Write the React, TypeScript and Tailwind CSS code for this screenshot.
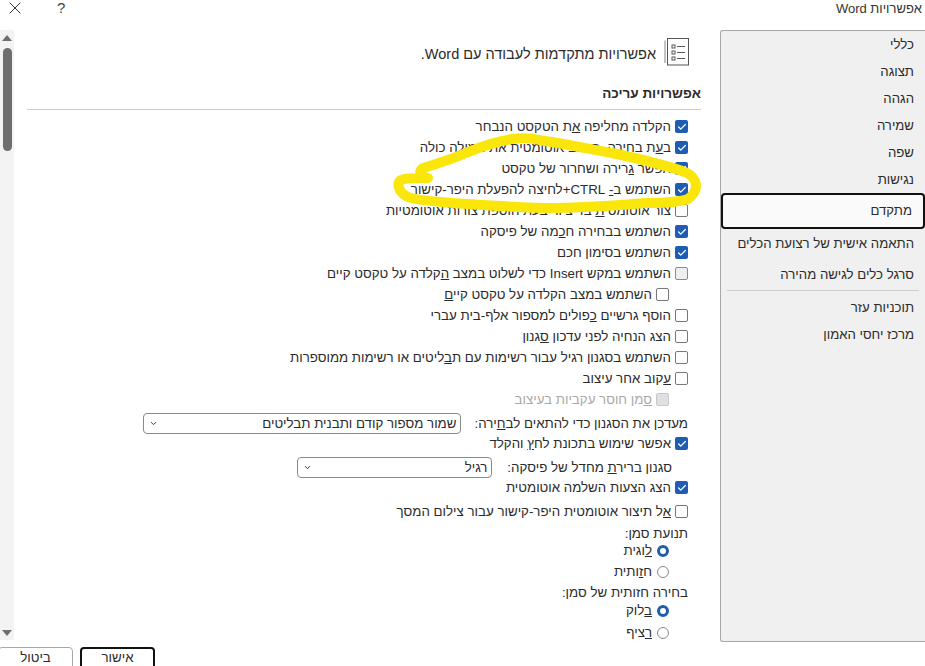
import React from 'react';
import { X, ChevronDown, Check } from 'lucide-react';

function Box({ state = 'off' }: { state?: 'on' | 'off' | 'grey' | 'disabled' }) {
  if (state === 'on') {
    return (
      <span className="w-[13px] h-[13px] shrink-0 rounded-[2px] bg-[#1f5cb4] flex items-center justify-center">
        <Check className="w-[10px] h-[10px] text-white" strokeWidth={3} />
      </span>
    );
  }
  if (state === 'grey') return <span className="w-[13px] h-[13px] shrink-0 rounded-[2px] border border-[#8a8a8a] bg-[#efefef]" />;
  if (state === 'disabled') return <span className="w-[13px] h-[13px] shrink-0 rounded-[2px] border border-[#c8c8c8] bg-[#e0e0e0]" />;
  return <span className="w-[13px] h-[13px] shrink-0 rounded-[2px] border border-[#777]" />;
}

function CheckRow({ state, indent, faded, children }: { state?: 'on' | 'off' | 'grey' | 'disabled'; indent?: boolean; faded?: boolean; children: React.ReactNode }) {
  return (
    <div className={`h-[21px] flex items-center gap-[4px] ${indent ? 'pr-[19px]' : ''} ${faded ? 'text-[#a9a9a9]' : ''}`}>
      <Box state={state} />
      <span>{children}</span>
    </div>
  );
}

function Radio({ on, children }: { on?: boolean; children: React.ReactNode }) {
  return (
    <div className="h-[21px] flex items-center gap-[5px] pr-[19px]">
      {on ? (
        <span className="w-[12px] h-[12px] rounded-full border-[3.5px] border-[#1f5cb4] bg-white shrink-0" />
      ) : (
        <span className="w-[12px] h-[12px] rounded-full border border-[#8a8a8a] shrink-0" />
      )}
      <span>{children}</span>
    </div>
  );
}

function Combo({ width, children }: { width: string; children: React.ReactNode }) {
  return (
    <div className={`${width} h-[21px] rounded-[4px] border border-[#8a8a8a] flex items-center justify-between pr-[4px] pl-[5px]`}>
      <span>{children}</span>
      <ChevronDown className="w-[9px] h-[9px] text-[#333]" strokeWidth={2.5} />
    </div>
  );
}

const navTop = ['כללי', 'תצוגה', 'הגהה', 'שמירה', 'שפה', 'נגישות'];

export default function App() {
  return (
    <div dir="rtl" className="relative w-[925px] h-[666px] overflow-hidden bg-white text-[13.3px] leading-[18px] text-[#2b2b2b]" style={{ fontFamily: '"Liberation Sans", Arial, sans-serif' }}>
      {/* Title bar */}
      <div className="h-[30px] flex items-start justify-between pr-[3px] pl-[5px]">
        <span className="text-[13px] text-[#333]">אפשרויות Word</span>
        <div dir="ltr" className="flex items-center gap-[32px] -mt-[2px]">
          <X className="w-[20px] h-[20px] text-[#333]" strokeWidth={1.2} />
          <span className="text-[15px] text-[#444]">?</span>
        </div>
      </div>

      <div className="flex h-[606px]">
        {/* Side nav */}
        <div className="w-[205px] h-[612px] rounded-l-[3px] border border-r-0 border-[#a8a8a8] bg-[#f0f0f0] text-[13.2px] shrink-0 -ml-[1px]">
          <div className="flex flex-col">
            {navTop.map(n => (
              <div key={n} className="h-[27px] flex items-center pr-[11px]">{n}</div>
            ))}
            <div className="h-[36px] rounded-[4px] border-2 border-[#111] bg-[#fafafa] flex items-center pr-[11px]">מתקדם</div>
            <div className="h-[30px] flex items-center pr-[11px]">התאמה אישית של רצועת הכלים</div>
            <div className="h-[31px] flex items-center pr-[11px]">סרגל כלים לגישה מהירה</div>
            <div className="h-px bg-[#cfcfcf] mx-[6px] mb-[3px]" />
            <div className="h-[27px] flex items-center pr-[11px]">תוכניות עזר</div>
            <div className="h-[27px] flex items-center pr-[11px]">מרכז יחסי האמון</div>
          </div>
        </div>

        {/* Main */}
        <div className="flex-1 min-w-0 pr-[20px] pl-[13px]">
          <div className="flex items-center gap-[8px] h-[44px] pr-[11px]">
            <svg width="26" height="30" viewBox="0 0 26 30" fill="none" stroke="#555" strokeWidth="1" className="shrink-0">
              <path d="M1 3.5V26" stroke="#888" />
              <rect x="3.5" y="1.5" width="21" height="26.5" />
              <rect x="8" y="8" width="3" height="3" />
              <rect x="8" y="14" width="3" height="3" />
              <rect x="8" y="20" width="3" height="3" />
              <path d="M13 9.5h8M13 15.5h8M13 21.5h8" />
            </svg>
            <span className="text-[14.5px] pt-[4px]">אפשרויות מתקדמות לעבודה עם Word.</span>
          </div>
          <div className="mt-[12px] h-[24px] font-bold text-[13.5px] leading-[16px] border-b border-[#cfcfcf]">אפשרויות עריכה</div>

          <div className="mt-[6px] pr-[13px] flex flex-col">
            <CheckRow state="on">הקלדה מחליפה <u>א</u>ת הטקסט הנבחר</CheckRow>
            <CheckRow state="on">ב<u>ע</u>ת בחירה, הרחב אוטומטית את המילה כולה</CheckRow>
            <CheckRow state="on">אפשר <u>ג</u>רירה ושחרור של טקסט</CheckRow>
            <CheckRow state="on">השתמש ב<u>-</u> CTRL+לחיצה להפעלת היפר-קישור</CheckRow>
            <CheckRow>צור אוטומטי<u>ת</u> בד ציור בעת הוספת צורות אוטומטיות</CheckRow>
            <CheckRow state="on">השתמש בבחירה ח<u>כ</u>מה של פיסקה</CheckRow>
            <CheckRow state="on">השתמש בסימו<u>ן</u> חכם</CheckRow>
            <CheckRow state="grey">השתמש במקש Insert כדי לשלוט במצב <u>ה</u>קלדה על טקסט קיים</CheckRow>
            <CheckRow indent>השתמש במצב הקלדה על טקסט קיי<u>ם</u></CheckRow>
            <CheckRow>הוסף גרשיים <u>כ</u>פולים למספור אלף-בית עברי</CheckRow>
            <CheckRow>הצג הנחיה לפני עדכון <u>ס</u>גנון</CheckRow>
            <CheckRow>השתמש בסגנון רגיל עבור רשימות עם ת<u>ב</u>ליטים או רשימות ממוספרות</CheckRow>
            <CheckRow><u>ע</u>קוב אחר עיצוב</CheckRow>
            <CheckRow state="disabled" indent faded><u>ס</u>מן חוסר עקביות בעיצוב</CheckRow>

            <div className="h-[21px] mt-[3px] -mb-[1px] flex items-center gap-[13px]">
              <span>מעדכן את הסגנון כדי להתאים לב<u>ח</u>ירה:</span>
              <Combo width="w-[318px]">שמור מספור קודם ותבנית תבליטים</Combo>
            </div>
            <CheckRow state="on">אפשר שימוש בתכונת לח<u>ץ</u> והקלד</CheckRow>
            <div className="h-[21px] mt-[3px] -mb-[1px] flex items-center gap-[15px] pr-[16px]">
              <span>סגנון בריר<u>ת</u> מחדל של פיסקה:</span>
              <Combo width="w-[195px]">רגיל</Combo>
            </div>
            <CheckRow state="on">הצג הצעות השלמה אוטומטית</CheckRow>
            <div className="mt-[3px]">
              <CheckRow><u>א</u>ל תיצור אוטומטית היפר-קישור עבור צילום המסך</CheckRow>
            </div>
            <div className="h-[17px] mt-[3px] -mb-[2px] flex items-center">תנועת סמן:</div>
            <Radio on><u>ל</u>וגית</Radio>
            <Radio>ח<u>ז</u>ותית</Radio>
            <div className="h-[17px] mt-[2px] -mb-[1px] flex items-center">בחירה חזותית של סמן:</div>
            <Radio on><u>ב</u>לוק</Radio>
            <div className="mt-[1px]">
              <Radio><u>ר</u>ציף</Radio>
            </div>
          </div>
        </div>

        {/* Scrollbar */}
        <div className="w-[14px] h-[610px] bg-[#f3f3f3] shrink-0 flex flex-col items-center pt-[5px]">
          <span className="w-0 h-0 border-x-[5px] border-x-transparent border-b-[6px] border-b-[#6e6e6e]" />
          <span className="mt-[7px] w-[9px] h-[103px] rounded-full bg-[#6e6e6e]" />
          <span className="mt-auto mb-[4px] w-0 h-0 border-x-[5px] border-x-transparent border-t-[6px] border-t-[#6e6e6e]" />
        </div>
      </div>

      {/* Footer buttons sit over the bottom edge of the page */}
      <div className="absolute left-[-2px] top-[647px] flex flex-row-reverse gap-[7px] leading-[14px]" dir="ltr">
        <div className="w-[75px] h-[30px] rounded-[4px] border-2 border-[#111] flex justify-center pt-[2px]">אישור</div>
        <div className="w-[75px] h-[30px] rounded-[4px] border border-[#a8a8a8] flex justify-center pt-[3px]">ביטול</div>
      </div>

      {/* Yellow marker scribble */}
      <svg className="absolute left-0 top-0 pointer-events-none" width="925" height="666" fill="none">
        <path d="M512 139 C525 137 535 139 545 141 C570 145 590 149 612 153 C640 159 665 165 685 172 C698 178 700 190 688 199 C675 203 660 203 645 203 C610 206 580 208 545 208 C510 207 480 205 452 203 C430 201 415 200 408 197 C399 193 396 184 401 180 C408 177 420 179 428 178 C420 176 418 172 423 168 C440 163 455 158 468 152 C483 146 498 141 512 139Z" stroke="#fae60a" strokeWidth="10" strokeLinejoin="round" />
      </svg>
    </div>
  );
}
